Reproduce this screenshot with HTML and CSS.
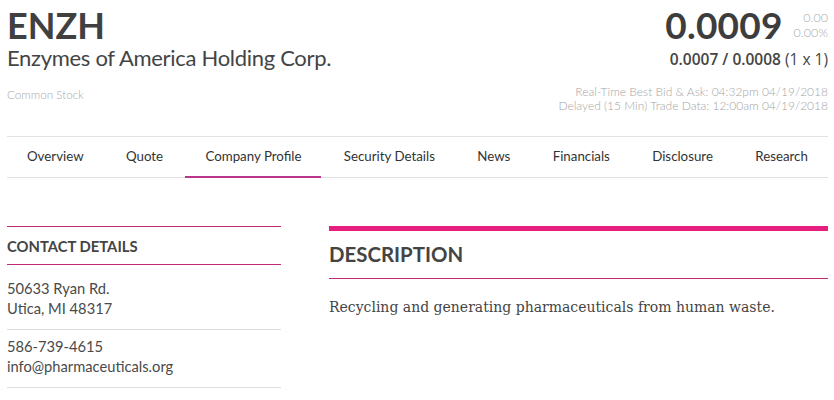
FILE: index.html
```html
<!DOCTYPE html>
<html>
<head>
<meta charset="utf-8">
<link rel="stylesheet" href="styles.css">
</head>
<body>
<div class="page">
  <header class="header">
    <div class="id">
      <h1 class="ticker">ENZH</h1>
      <div class="company">Enzymes of America Holding Corp.</div>
      <div class="type">Common Stock</div>
    </div>
    <div class="quote">
      <div class="price-row">
        <span class="price">0.0009</span>
        <span class="change"><span>0.00</span><span>0.00%</span></span>
      </div>
      <div class="bidask"><b>0.0007 / 0.0008</b> (1 x 1)</div>
      <div class="times">
        <div>Real-Time Best Bid &amp; Ask: 04:32pm 04/19/2018</div>
        <div>Delayed (15 Min) Trade Data: 12:00am 04/19/2018</div>
      </div>
    </div>
  </header>
  <nav class="nav">
    <a>Overview</a>
    <a>Quote</a>
    <a class="active">Company Profile</a>
    <a>Security Details</a>
    <a>News</a>
    <a>Financials</a>
    <a>Disclosure</a>
    <a>Research</a>
  </nav>
  <main class="content">
    <section class="contact">
      <h2 class="contact-title">CONTACT DETAILS</h2>
      <div class="contact-block first">50633 Ryan Rd.<br>Utica, MI 48317</div>
      <div class="contact-block">586-739-4615<br>info@pharmaceuticals.org</div>
    </section>
    <section class="desc">
      <h2 class="desc-title">DESCRIPTION</h2>
      <p class="desc-text">Recycling and generating pharmaceuticals from human waste.</p>
    </section>
  </main>
</div>
</body>
</html>
```
FILE: styles.css
```css
* { box-sizing: border-box; }
html, body { margin: 0; padding: 0; background: #fff; }
body { font-family: "Lato", "Noto Sans", sans-serif; color: #444; }
.page { padding: 0 6px 0 7px; width: 834px; }

.header { display: flex; justify-content: space-between; height: 136px; }
.ticker { margin: 0; font-size: 36px; font-weight: 700; line-height: 44px; padding-top: 3px; color: #404040; }
.company { font-size: 22px; line-height: 26px; color: #444; margin-top: -2px; letter-spacing: -0.3px; }
.type { font-size: 11.7px; color: #aaa; font-weight: 300; margin-top: 16px; }

.quote { display: flex; flex-direction: column; align-items: flex-end; }
.price-row { display: flex; align-items: flex-start; gap: 11px; padding-top: 3px; }
.price { font-size: 37px; font-weight: 700; line-height: 44px; color: #3d3d3d; letter-spacing: 0.2px; }
.change { display: flex; flex-direction: column; align-items: flex-end; font-size: 12.5px; line-height: 15px; color: #aaa; font-weight: 300; padding-top: 7px; }
.bidask { font-family: "Open Sans", "Lato", sans-serif; font-size: 15.5px; color: #444; margin-top: 1px; }
.bidask b { font-weight: 600; }
.times { margin-top: 15px; text-align: right; font-size: 12px; line-height: 14px; color: #a5a5a5; font-weight: 300; }

.nav { display: flex; justify-content: space-between; border-top: 1px solid #e2e2e2; border-bottom: 1px solid #e2e2e2; height: 42px; width: 821px; }
.nav a { flex: none; white-space: nowrap; padding: 0 20px; font-size: 13.3px; line-height: 38px; color: #333; border-bottom: 2px solid transparent; height: 41px; display: block; }
.nav a.active { border-bottom-color: #b8358a; }

.content { display: flex; gap: 48px; padding-top: 48px; width: 821px; }
.contact { width: 274px; border-top: 1px solid #c02a75; }
.contact-title { margin: 0; font-size: 14.8px; font-weight: 700; line-height: 36px; color: #444; border-bottom: 1px solid #c02a75; padding-top: 1px; height: 38px; }
.contact-block { font-size: 14.7px; line-height: 20px; color: #4a4a4a; padding: 6px 0 11px; border-bottom: 1px solid #ddd; }
.contact-block.first { padding-top: 13px; }

.desc { flex: 1; border-top: 5px solid #e61e7f; }
.desc-title { margin: 0; font-size: 20.4px; font-weight: 700; line-height: 46px; height: 48px; color: #444; border-bottom: 1px solid #c02a75; }
.desc-text { margin: 20px 0 0; font-family: "DejaVu Serif", serif; font-size: 14px; color: #444; }
```
